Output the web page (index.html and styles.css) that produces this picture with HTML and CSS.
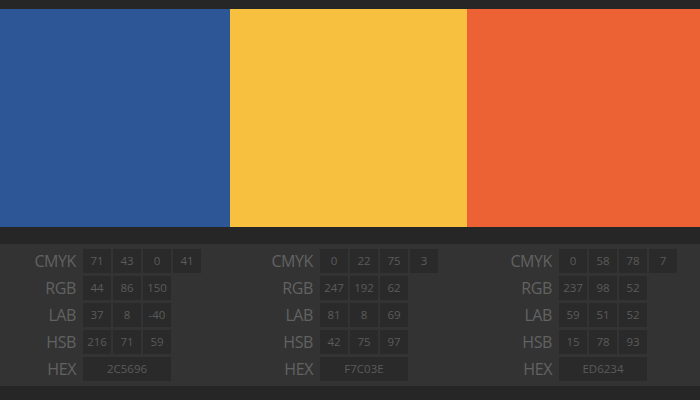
FILE: index.html
```html
<!DOCTYPE html>
<html>
<head>
<meta charset="utf-8">
<link rel="stylesheet" href="styles.css">
</head>
<body>
<div class="topbar"></div>
<div class="swatches">
  <div class="swatch blue"></div>
  <div class="swatch yellow"></div>
  <div class="swatch orange"></div>
</div>
<div class="band"></div>
<div class="panel">
  <div class="group">
    <div class="label">CMYK</div><div class="cell">71</div><div class="cell">43</div><div class="cell">0</div><div class="cell">41</div>
    <div class="label">RGB</div><div class="cell">44</div><div class="cell">86</div><div class="cell">150</div><div class="empty"></div>
    <div class="label">LAB</div><div class="cell">37</div><div class="cell">8</div><div class="cell">-40</div><div class="empty"></div>
    <div class="label">HSB</div><div class="cell">216</div><div class="cell">71</div><div class="cell">59</div><div class="empty"></div>
    <div class="label">HEX</div><div class="cell hex">2C5696</div>
  </div>
  <div class="group">
    <div class="label">CMYK</div><div class="cell">0</div><div class="cell">22</div><div class="cell">75</div><div class="cell">3</div>
    <div class="label">RGB</div><div class="cell">247</div><div class="cell">192</div><div class="cell">62</div><div class="empty"></div>
    <div class="label">LAB</div><div class="cell">81</div><div class="cell">8</div><div class="cell">69</div><div class="empty"></div>
    <div class="label">HSB</div><div class="cell">42</div><div class="cell">75</div><div class="cell">97</div><div class="empty"></div>
    <div class="label">HEX</div><div class="cell hex">F7C03E</div>
  </div>
  <div class="group">
    <div class="label">CMYK</div><div class="cell">0</div><div class="cell">58</div><div class="cell">78</div><div class="cell">7</div>
    <div class="label">RGB</div><div class="cell">237</div><div class="cell">98</div><div class="cell">52</div><div class="empty"></div>
    <div class="label">LAB</div><div class="cell">59</div><div class="cell">51</div><div class="cell">52</div><div class="empty"></div>
    <div class="label">HSB</div><div class="cell">15</div><div class="cell">78</div><div class="cell">93</div><div class="empty"></div>
    <div class="label">HEX</div><div class="cell hex">ED6234</div>
  </div>
</div>
<div class="footer"></div>
</body>
</html>
```

FILE: styles.css
```css
html, body {
  margin: 0;
  padding: 0;
  width: 700px;
  height: 400px;
  overflow: hidden;
  background: #262626;
  font-family: "Open Sans", "DejaVu Sans", sans-serif;
}
.topbar {
  height: 9px;
  background: #262626;
}
.swatches {
  display: grid;
  grid-template-columns: 230px 237px 1fr;
  height: 218px;
}
.blue { background: #2C5696; }
.yellow { background: #F7C03E; }
.orange { background: #ED6234; }
.band {
  height: 17px;
  background: #262626;
}
.panel {
  display: grid;
  grid-template-columns: 237px 239px 1fr;
  background: #333333;
  padding: 5px 0;
  height: 132px;
}
.group {
  display: grid;
  grid-template-columns: 81px 28px 28px 28px 28px;
  grid-auto-rows: 24px;
  column-gap: 2px;
  row-gap: 3px;
}
.label {
  margin-right: 5px;
  text-align: right;
  color: #626262;
  font-size: 16px;
  letter-spacing: -0.4px;
  line-height: 24px;
}
.cell {
  background: #2a2a2a;
  color: #5b5b5b;
  font-size: 11.5px;
  line-height: 24px;
  text-align: center;
}
.hex {
  grid-column: span 3;
}
.footer {
  height: 14px;
  background: #262626;
}
```
